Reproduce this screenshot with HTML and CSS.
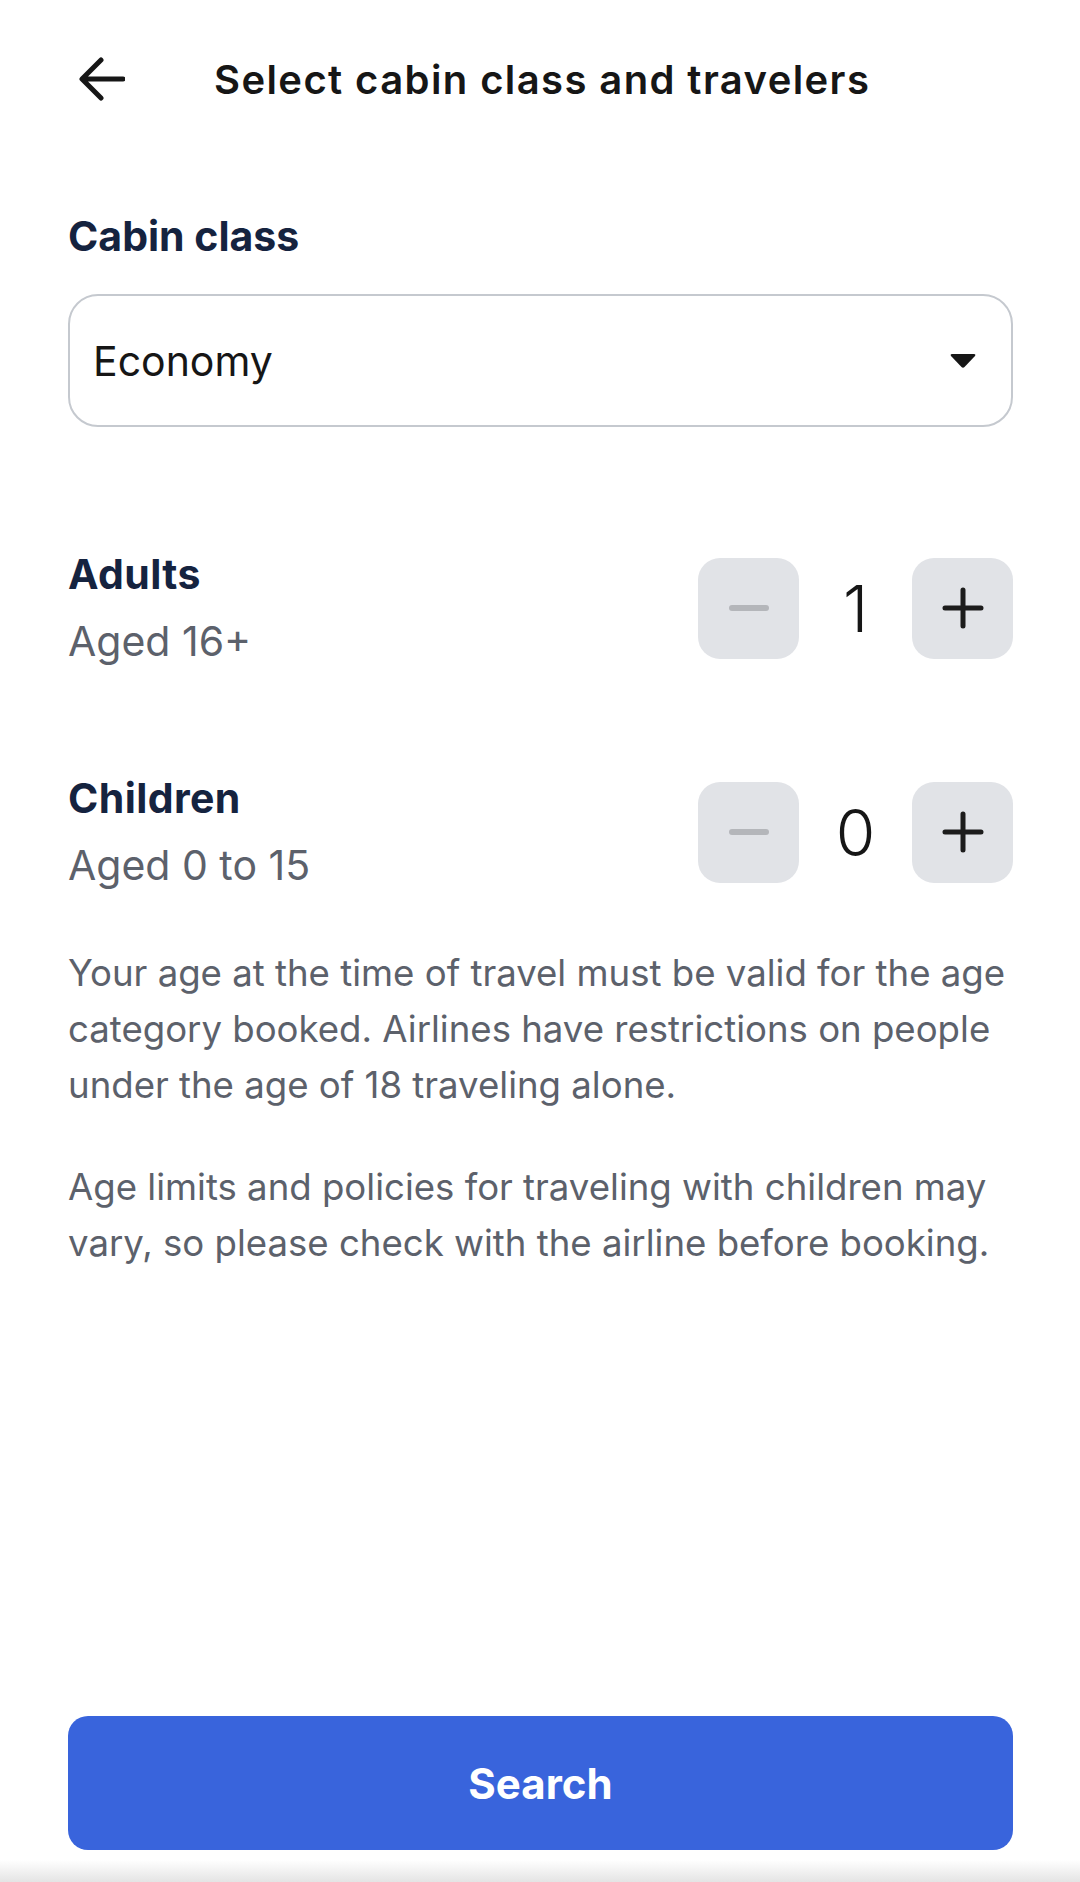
FILE: index.html
```html
<!DOCTYPE html>
<html lang="en">
<head>
  <meta charset="UTF-8">
  <title>Select cabin class and travelers</title>
  <link rel="stylesheet" href="styles.css">
</head>
<body>

  <header class="top-bar">
    <button class="back-btn" aria-label="Back">
      <svg width="46" height="44" viewBox="0 0 46 44">
        <path d="M44 22 H4 M22 3 L3 22 L22 41" fill="none" stroke="#161616" stroke-width="5" stroke-linecap="round" stroke-linejoin="round"/>
      </svg>
    </button>
    <h1 class="page-title">Select cabin class and travelers</h1>
  </header>

  <main class="content">
    <h2 class="label">Cabin class</h2>
    <div class="select-box">
      <span class="select-value">Economy</span>
      <svg class="caret" width="28" height="17" viewBox="0 0 28 17">
        <path d="M3 2 H25 Q27 2 26 4 L15.5 15 Q14 16.5 12.5 15 L2 4 Q1 2 3 2 Z" fill="#161616"/>
      </svg>
    </div>

    <div class="traveler-row first">
      <div class="traveler-info">
        <div class="traveler-name">Adults</div>
        <div class="traveler-age">Aged 16+</div>
      </div>
      <div class="stepper">
        <button class="step-btn" disabled aria-label="Remove adult">
          <svg width="40" height="8" viewBox="0 0 40 8"><path d="M3 4 H37" stroke="#b4b6ba" stroke-width="6" stroke-linecap="round"/></svg>
        </button>
        <span class="count">1</span>
        <button class="step-btn" aria-label="Add adult">
          <svg width="42" height="42" viewBox="0 0 42 42"><path d="M3 21 H39 M21 3 V39" stroke="#1c1c1c" stroke-width="5" stroke-linecap="round"/></svg>
        </button>
      </div>
    </div>

    <div class="traveler-row">
      <div class="traveler-info">
        <div class="traveler-name">Children</div>
        <div class="traveler-age">Aged 0 to 15</div>
      </div>
      <div class="stepper">
        <button class="step-btn" disabled aria-label="Remove child">
          <svg width="40" height="8" viewBox="0 0 40 8"><path d="M3 4 H37" stroke="#b4b6ba" stroke-width="6" stroke-linecap="round"/></svg>
        </button>
        <span class="count">0</span>
        <button class="step-btn" aria-label="Add child">
          <svg width="42" height="42" viewBox="0 0 42 42"><path d="M3 21 H39 M21 3 V39" stroke="#1c1c1c" stroke-width="5" stroke-linecap="round"/></svg>
        </button>
      </div>
    </div>

    <p class="note">Your age at the time of travel must be valid for the age category booked. Airlines have restrictions on people under the age of 18 traveling alone.</p>
    <p class="note">Age limits and policies for traveling with children may vary, so please check with the airline before booking.</p>
  </main>

  <footer class="bottom">
    <button class="search-btn">Search</button>
  </footer>
  <div class="bottom-shade"></div>

</body>
</html>
```

FILE: styles.css
```css
html, body {
  margin: 0;
  padding: 0;
}

body {
  font-family: Inter, 'Noto Sans', sans-serif;
  background-color: #ffffff;
  color: #161616;
  height: 1882px;
  display: flex;
  flex-direction: column;
}

button {
  font-family: inherit;
  border: none;
  padding: 0;
  background: none;
}

.top-bar {
  height: 158px;
  display: flex;
  align-items: center;
  padding-left: 79px;
}

.back-btn {
  width: 46px;
  height: 44px;
  display: flex;
}

.page-title {
  margin: 0 0 0 89px;
  font-size: 40px;
  font-weight: 600;
  letter-spacing: 1.4px;
  color: #161616;
}

.content {
  padding: 0 67px 0 68px;
}

.label {
  margin: 55px 0 0 0;
  font-size: 41px;
  line-height: 46px;
  font-weight: 700;
  color: #15233f;
}

.select-box {
  margin-top: 35px;
  height: 129px;
  border: 2px solid #c5c9cf;
  border-radius: 30px;
  display: flex;
  align-items: center;
  justify-content: space-between;
  padding: 0 34px 0 23px;
}

.select-value {
  font-size: 41px;
  color: #161616;
}

.traveler-row {
  display: flex;
  align-items: center;
  justify-content: space-between;
  margin-top: 110px;
}

.traveler-row.first {
  margin-top: 124px;
}

.traveler-name {
  font-size: 41px;
  line-height: 46px;
  font-weight: 700;
  letter-spacing: 0.4px;
  color: #15233f;
}

.traveler-age {
  margin-top: 20px;
  font-size: 41px;
  line-height: 48px;
  color: #5c616b;
}

.stepper {
  display: flex;
  align-items: center;
}

.step-btn {
  width: 101px;
  height: 101px;
  border-radius: 22px;
  background-color: #e1e3e7;
  display: flex;
  align-items: center;
  justify-content: center;
}

.count {
  width: 113px;
  text-align: center;
  font-size: 64px;
  font-weight: 300;
  color: #161616;
}

.note {
  margin: 56px -12px 0 0;
  font-size: 36.6px;
  line-height: 56px;
  color: #5c616b;
}

.note + .note {
  margin-top: 46px;
}

.bottom {
  margin-top: auto;
  padding: 0 67px 10px 68px;
}

.search-btn {
  width: 100%;
  height: 134px;
  border-radius: 20px;
  background-color: #3964dc;
  color: #ffffff;
  font-size: 42px;
  font-weight: 700;
  cursor: pointer;
}

.bottom-shade {
  height: 22px;
  background: linear-gradient(to bottom, #ffffff, #e4e4e4);
}
```
